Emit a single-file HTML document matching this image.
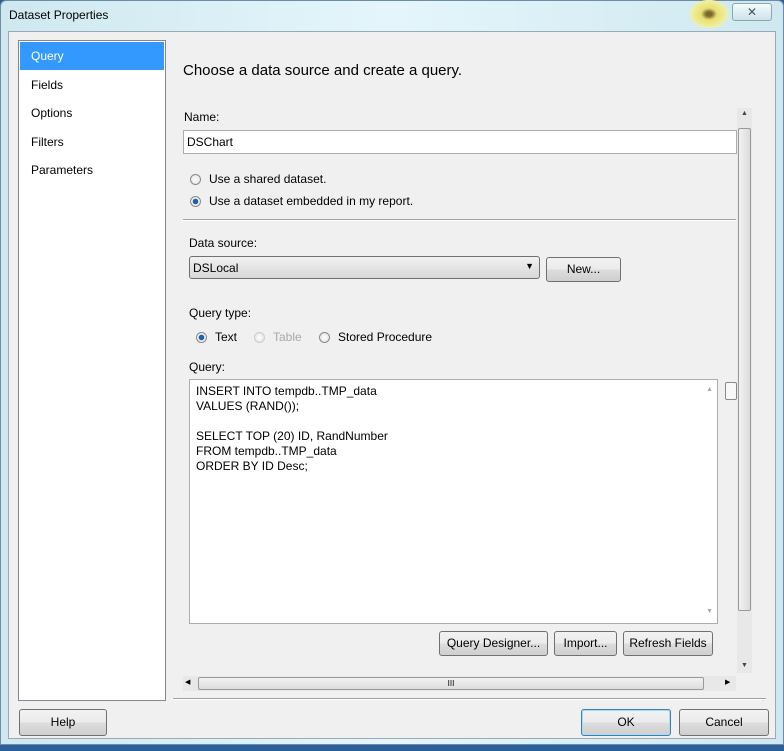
<!DOCTYPE html><html><head><style>
body{margin:0;width:784px;height:751px;overflow:hidden;background:#2a5f9a;font-family:"Liberation Sans",sans-serif;font-size:12px;color:#000;position:relative}
.a{position:absolute}
.btn{position:absolute;border:1px solid #707070;border-radius:3px;background:linear-gradient(#f2f2f2,#ebebeb 50%,#dddddd 51%,#cfcfcf);text-align:center;box-sizing:border-box;font-size:12px}
.rad{position:absolute;width:11px;height:11px;border-radius:50%;border:1px solid #8a8a8a;background:radial-gradient(#fff,#ddd);box-sizing:border-box}
.dot{background:radial-gradient(#1a5fb0 0 2.5px,#eee 3px)}
</style></head><body>
<div class="a" style="left:0;top:0;width:784px;height:745px;background:linear-gradient(90deg,#cfe8f0,#e4f6fb 50%,#cfe8f0);border:1px solid #6d8ca8;border-radius:6px 6px 0 0;box-sizing:border-box"></div>
<div class="a" style="left:9px;top:8px;font-size:12px">Dataset Properties</div>
<div class="a" style="left:690px;top:0;width:38px;height:28px;background:radial-gradient(#7a6a30 0 3px,#e8e070 8px,#f0f0a8 70%,transparent 72%)"></div>
<div class="a" style="left:732px;top:3px;width:40px;height:18px;border:1px solid #8aa;border-radius:3px;background:linear-gradient(#f4fbfd,#cde3ea);box-sizing:border-box;text-align:center;color:#456;font-size:12px;line-height:16px">✕</div>
<div class="a" style="left:8px;top:31px;width:768px;height:708px;background:#f0f0f0;border:1px solid #9aa9b5;box-sizing:border-box"></div>
<div class="a" style="left:18px;top:40px;width:148px;height:661px;background:#fff;border:1px solid #828790;box-sizing:border-box"></div>
<div class="a" style="left:20px;top:42px;width:144px;height:28px;background:#3399ff"></div>
<div class="a" style="left:31px;top:49px;color:#fff">Query</div>
<div class="a" style="left:31px;top:78px">Fields</div>
<div class="a" style="left:31px;top:106px">Options</div>
<div class="a" style="left:31px;top:135px">Filters</div>
<div class="a" style="left:31px;top:163px">Parameters</div>
<div class="a" style="left:183px;top:62px;font-size:15px">Choose a data source and create a query.</div>
<div class="a" style="left:184px;top:110px">Name:</div>
<div class="a" style="left:183px;top:130px;width:554px;height:24px;background:#fff;border:1px solid #abadb3;box-sizing:border-box;padding:4px 3px">DSChart</div>
<div class="rad" style="left:190px;top:174px"></div><div class="a" style="left:209px;top:172px">Use a shared dataset.</div>
<div class="rad dot" style="left:190px;top:196px"></div><div class="a" style="left:209px;top:194px">Use a dataset embedded in my report.</div>
<div class="a" style="left:183px;top:219px;width:553px;height:1px;background:#a0a0a0;border-bottom:1px solid #fff"></div>
<div class="a" style="left:189px;top:236px">Data source:</div>
<div class="a" style="left:189px;top:256px;width:351px;height:23px;border:1px solid #707070;border-radius:3px;background:linear-gradient(#f2f2f2,#e4e4e4 50%,#d8d8d8);box-sizing:border-box;padding:4px 3px">DSLocal<span style="position:absolute;right:5px;top:4px;font-size:9px">▼</span></div>
<div class="btn" style="left:546px;top:257px;width:75px;height:25px;line-height:23px">New...</div>
<div class="a" style="left:189px;top:306px">Query type:</div>
<div class="rad dot" style="left:196px;top:332px"></div><div class="a" style="left:215px;top:330px">Text</div>
<div class="rad" style="left:254px;top:332px;border-color:#ccc"></div><div class="a" style="left:273px;top:330px;color:#a8a8a8">Table</div>
<div class="rad" style="left:319px;top:332px"></div><div class="a" style="left:338px;top:330px">Stored Procedure</div>
<div class="a" style="left:189px;top:360px">Query:</div>
<div class="a" style="left:189px;top:379px;width:529px;height:245px;background:#fff;border:1px solid #abadb3;box-sizing:border-box;padding:4px 6px;line-height:15px">INSERT INTO tempdb..TMP_data<br>VALUES (RAND());<br><br>SELECT TOP (20) ID, RandNumber<br>FROM tempdb..TMP_data<br>ORDER BY ID Desc;<span style="position:absolute;right:4px;top:2px;font-size:7px;color:#aaa">▲</span><span style="position:absolute;right:4px;bottom:4px;font-size:7px;color:#aaa">▼</span></div>
<div class="a" style="left:725px;top:382px;width:12px;height:18px;border:1px solid #888;border-radius:2px;background:#f8f8f8;box-sizing:border-box"></div>
<div class="btn" style="left:439px;top:631px;width:109px;height:25px;line-height:23px">Query Designer...</div>
<div class="btn" style="left:554px;top:631px;width:63px;height:25px;line-height:23px">Import...</div>
<div class="btn" style="left:623px;top:631px;width:90px;height:25px;line-height:23px">Refresh Fields</div>
<div class="a" style="left:737px;top:108px;width:15px;height:565px;background:#e8e8e8"></div>
<div class="a" style="left:738px;top:128px;width:13px;height:483px;border:1px solid #999;border-radius:2px;background:linear-gradient(90deg,#f2f2f2,#dcdcdc);box-sizing:border-box"></div>
<div class="a" style="left:741px;top:110px;font-size:7px;color:#444">▲</div><div class="a" style="left:741px;top:662px;font-size:7px;color:#444">▼</div>
<div class="a" style="left:183px;top:676px;width:553px;height:15px;background:#e8e8e8"></div>
<div class="a" style="left:198px;top:677px;width:506px;height:13px;border:1px solid #999;border-radius:2px;background:linear-gradient(#f2f2f2,#dcdcdc);box-sizing:border-box;text-align:center;font-size:8px;line-height:11px">III</div>
<div class="a" style="left:185px;top:678px;font-size:7px">◀</div><div class="a" style="left:725px;top:678px;font-size:7px">▶</div>
<div class="a" style="left:173px;top:698px;width:593px;height:1px;background:#a0a0a0;border-bottom:1px solid #fff"></div>
<div class="btn" style="left:19px;top:709px;width:88px;height:27px;line-height:25px">Help</div>
<div class="btn" style="left:581px;top:709px;width:90px;height:27px;line-height:25px;border-color:#3c7fb1;box-shadow:inset 0 0 0 1px #a8dcf5">OK</div>
<div class="btn" style="left:679px;top:709px;width:90px;height:27px;line-height:25px">Cancel</div>
</body></html>
